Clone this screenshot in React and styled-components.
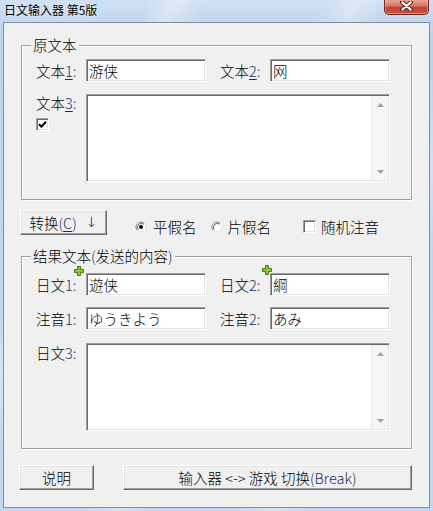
import React from 'react';
import styled, { createGlobalStyle } from 'styled-components';

const FONT = `"Noto Sans CJK SC", "Noto Sans CJK JP", "Noto Sans", sans-serif`;

const GlobalStyle = createGlobalStyle`
  html, body { margin: 0; padding: 0; background: #c0d6ee; }
  body { font-family: ${FONT}; }
  *, *::before, *::after { box-sizing: border-box; }
`;

const Window = styled.div`
  width: 433px;
  height: 511px;
  display: flex;
  flex-direction: column;
  overflow: hidden;
  background:
    linear-gradient(115deg, transparent 0 22%, rgba(255,255,255,0.35) 26%, transparent 31%,
      transparent 48%, rgba(255,255,255,0.3) 53%, transparent 58%,
      transparent 70%, rgba(255,255,255,0.3) 76%, transparent 82%),
    linear-gradient(180deg, #cfe0f3 0%, #bcd3ec 6%, #c3d8ef 100%);
`;

const TitleBar = styled.div`
  height: 22px;
  flex-shrink: 0;
  display: flex;
  align-items: flex-start;
  padding-left: 4px;
`;

const Title = styled.div`
  margin-top: 3px;
  font: 12px/14px ${FONT};
  color: #000;
  text-shadow: 0 0 6px rgba(255,255,255,0.9);
`;

const CloseButton = styled.div`
  margin-left: auto;
  margin-right: 4px;
  width: 45px;
  height: 15px;
  border: 1px solid #74291f;
  border-top: none;
  border-radius: 0 0 5px 5px;
  background: linear-gradient(180deg, #e7a493 0%, #d87a66 40%, #c2412f 55%, #c9533c 100%);
  box-shadow: inset 0 -1px 0 rgba(255,255,255,0.35), inset 1px 0 0 rgba(255,255,255,0.25), inset -1px 0 0 rgba(255,255,255,0.25);
  display: flex;
  align-items: flex-start;
  justify-content: center;
  padding-top: 1px;
`;

const Client = styled.div`
  flex: 1;
  margin: 0 3px 3px 3px;
  background: #f0f0f0;
  border: 1px solid #7d8ea3;
  display: flex;
  flex-direction: column;
  padding: 22px 17px 0 17px;
`;

const Group = styled.div`
  position: relative;
  border: 1px solid #a0a0a0;
  box-shadow: inset 1px 1px 0 #ffffff, 1px 1px 0 #ffffff;
  padding: ${p => p.$pt}px 0 17px 14px;
  margin-top: ${p => p.$mt || 0}px;
  display: flex;
  flex-direction: column;
`;

const Legend = styled.div`
  position: absolute;
  top: -10px;
  left: 9px;
  padding: 0 2px;
  background: #f0f0f0;
  font: 300 14.5px/18px ${FONT};
  color: #000;
`;

const Latin = styled.span`
  color: #1e2a66;
  text-decoration: ${p => (p.$u ? 'underline' : 'none')};
  text-underline-offset: 2px;
`;

const Row = styled.div`
  display: flex;
  align-items: ${p => (p.$top ? 'flex-start' : 'center')};
  height: ${p => p.$h || 23}px;
  margin-top: ${p => p.$mt || 0}px;
`;

const Label = styled.div`
  width: ${p => p.$w || 50}px;
  margin-left: ${p => p.$ml || 0}px;
  font: 300 14.5px/17px ${FONT};
  color: #000;
  white-space: nowrap;
`;

const LabelColumn = styled.div`
  width: 50px;
  display: flex;
  flex-direction: column;
  align-items: flex-start;
  gap: 7px;
  padding-top: ${p => p.$pt || 0}px;
`;

const FieldSlot = styled.div`
  position: relative;
  display: flex;
`;

const PlusMark = styled.svg`
  position: absolute;
  left: ${p => p.$x}px;
  top: ${p => p.$y}px;
`;

const TextInput = styled.input`
  width: 120px;
  height: 23px;
  margin: 0;
  padding: 0 0 0 2px;
  border: 1px solid;
  border-color: #a0a0a0 #ffffff #ffffff #a0a0a0;
  box-shadow: inset 1px 1px 0 #696969, inset -1px -1px 0 #e3e3e3;
  background: #fff;
  font: 300 14.5px/19px ${FONT};
  color: #000;
  outline: none;
`;

const TextBox = styled.div`
  width: 304px;
  height: 88px;
  display: flex;
  border: 1px solid;
  border-color: #a0a0a0 #ffffff #ffffff #a0a0a0;
  box-shadow: inset 1px 1px 0 #696969, inset -1px -1px 0 #e3e3e3;
  background: #fff;
  padding: 1px;
`;

const TextPane = styled.div`
  flex: 1;
`;

const ScrollBar = styled.div`
  width: 17px;
  background: #f6f6f6;
  border-left: 1px solid #e9e9e9;
  display: flex;
  flex-direction: column;
  justify-content: space-between;
`;

const ScrollButton = styled.div`
  height: 17px;
  display: flex;
  align-items: center;
  justify-content: center;
`;

const CheckBoxBox = styled.div`
  width: 13px;
  height: 13px;
  border: 1px solid;
  border-color: #a0a0a0 #ffffff #ffffff #a0a0a0;
  box-shadow: inset 1px 1px 0 #696969, inset -1px -1px 0 #e3e3e3;
  background: #fff;
  display: flex;
  align-items: center;
  justify-content: center;
  flex-shrink: 0;
`;

const ActionRow = styled.div`
  display: flex;
  align-items: center;
  height: 25px;
  margin-top: 10px;
  margin-left: -1px;
`;

const Button = styled.button`
  width: ${p => p.$w}px;
  height: 25px;
  margin: 0 0 0 ${p => p.$ml || 0}px;
  padding: 0;
  background: #f0f0f0;
  border: 1px solid;
  border-color: #ffffff #696969 #696969 #ffffff;
  box-shadow: inset -1px -1px 0 #a0a0a0, inset 1px 1px 0 #e3e3e3;
  font: 300 14.5px/17px ${FONT};
  color: #000;
  display: flex;
  align-items: center;
  justify-content: center;
  white-space: nowrap;
`;

const Arrow = styled.span`
  font-family: "DejaVu Sans", sans-serif;
  font-size: 14px;
  margin-left: 9px;
`;

const Options = styled.div`
  display: flex;
  align-items: center;
  margin-top: 8px;
  margin-left: 28px;
`;

const Option = styled.div`
  display: flex;
  align-items: center;
  gap: ${p => p.$gap || 6}px;
  margin-left: ${p => p.$ml || 0}px;
  font: 300 14.5px/17px ${FONT};
  color: #000;
`;

const BottomRow = styled.div`
  display: flex;
  align-items: center;
  margin-top: 16px;
  margin-left: -2px;
`;

const Plus = ({ x, y }) => (
  <PlusMark $x={x} $y={y} width="10" height="10" viewBox="-0.5 -0.5 10 10">
    <path d="M3 0H6V3H9V6H6V9H3V6H0V3H3Z" fill="#8cc63e" stroke="#3f7d12" strokeWidth="1" />
  </PlusMark>
);

const Radio = ({ checked }) => (
  <svg width="12" height="12" viewBox="0 0 12 12">
    <circle cx="6" cy="6" r="5" fill="#fff" />
    <path d="M2.46 9.54 A5 5 0 0 1 9.54 2.46" fill="none" stroke="#8a8a8a" strokeWidth="1" />
    <path d="M9.54 2.46 A5 5 0 0 1 2.46 9.54" fill="none" stroke="#e3e3e3" strokeWidth="1" />
    <path d="M3.2 8.8 A4 4 0 0 1 8.8 3.2" fill="none" stroke="#696969" strokeWidth="1" />
    {checked && <circle cx="6" cy="6" r="2" fill="#000" />}
  </svg>
);

const CheckBox = ({ checked }) => (
  <CheckBoxBox>
    {checked && (
      <svg width="9" height="9" viewBox="0 0 9 9">
        <path d="M1 4.2 L3.4 6.6 L8 1.8" fill="none" stroke="#000" strokeWidth="2" />
      </svg>
    )}
  </CheckBoxBox>
);

const ScrollArrow = ({ down }) => (
  <svg width="7" height="4" viewBox="0 0 7 4">
    <path d={down ? 'M0 0H7L3.5 4Z' : 'M3.5 0L7 4H0Z'} fill="#a2a2a2" />
  </svg>
);

const MultiLine = () => (
  <TextBox>
    <TextPane />
    <ScrollBar>
      <ScrollButton><ScrollArrow /></ScrollButton>
      <ScrollButton><ScrollArrow down /></ScrollButton>
    </ScrollBar>
  </TextBox>
);

export default function App() {
  return (
    <>
      <GlobalStyle />
      <Window>
        <TitleBar>
          <Title>日文输入器 第5版</Title>
          <CloseButton>
            <svg width="13" height="10" viewBox="0 0 13 10">
              <path d="M2 1L11 9M11 1L2 9" stroke="#4a1a14" strokeWidth="4" strokeLinecap="round" />
              <path d="M2.3 1.3L10.7 8.7M10.7 1.3L2.3 8.7" stroke="#ffffff" strokeWidth="2.2" strokeLinecap="round" />
            </svg>
          </CloseButton>
        </TitleBar>
        <Client>
          <Group $pt={13}>
            <Legend>原文本</Legend>
            <Row>
              <Label>文本<Latin $u>1</Latin><Latin>:</Latin></Label>
              <FieldSlot><TextInput defaultValue="游侠" readOnly /></FieldSlot>
              <Label $ml={14}>文本<Latin $u>2</Latin><Latin>:</Latin></Label>
              <FieldSlot><TextInput defaultValue="网" readOnly /></FieldSlot>
            </Row>
            <Row $h={88} $mt={12} $top>
              <LabelColumn>
                <Label>文本<Latin $u>3</Latin><Latin>:</Latin></Label>
                <CheckBox checked />
              </LabelColumn>
              <MultiLine />
            </Row>
          </Group>

          <ActionRow>
            <Button $w={87}>转换<Latin>(</Latin><Latin $u>C</Latin><Latin>)</Latin><Arrow>↓</Arrow></Button>
            <Options>
              <Option><Radio checked />平假名</Option>
              <Option $ml={14} $gap={5}><Radio />片假名</Option>
              <Option $ml={32} $gap={5}><CheckBox />随机注音</Option>
            </Options>
          </ActionRow>

          <Group $pt={16} $mt={21}>
            <Legend>结果文本<Latin>(</Latin>发送的内容<Latin>)</Latin></Legend>
            <Row>
              <Label>日文<Latin>1:</Latin></Label>
              <FieldSlot>
                <Plus x={-12} y={-7} />
                <TextInput defaultValue="遊侠" readOnly />
              </FieldSlot>
              <Label $ml={14}>日文<Latin>2:</Latin></Label>
              <FieldSlot>
                <Plus x={-8} y={-8} />
                <TextInput defaultValue="綱" readOnly />
              </FieldSlot>
            </Row>
            <Row $mt={11}>
              <Label>注音<Latin>1:</Latin></Label>
              <FieldSlot><TextInput defaultValue="ゆうきよう" readOnly /></FieldSlot>
              <Label $ml={14}>注音<Latin>2:</Latin></Label>
              <FieldSlot><TextInput defaultValue="あみ" readOnly /></FieldSlot>
            </Row>
            <Row $h={88} $mt={13} $top>
              <LabelColumn $pt={1}>
                <Label>日文<Latin>3:</Latin></Label>
              </LabelColumn>
              <MultiLine />
            </Row>
          </Group>

          <BottomRow>
            <Button $w={75}>说明</Button>
            <Button $w={289} $ml={29}>输入器 &lt;-&gt; 游戏 切换<Latin>(Break)</Latin></Button>
          </BottomRow>
        </Client>
      </Window>
    </>
  );
}
